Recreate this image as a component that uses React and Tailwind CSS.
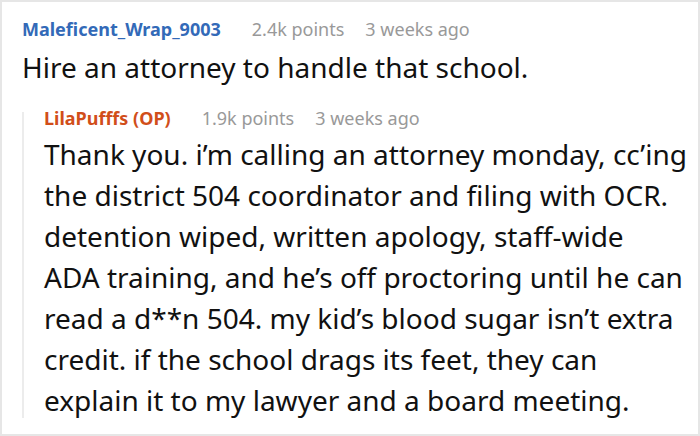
const replyLines = [
  'Thank you. i’m calling an attorney monday, cc’ing',
  'the district 504 coordinator and filing with OCR.',
  'detention wiped, written apology, staff-wide',
  'ADA training, and he’s off proctoring until he can',
  'read a d**n 504. my kid’s blood sugar isn’t extra',
  'credit. if the school drags its feet, they can',
  'explain it to my lawyer and a board meeting.',
]

export default function App() {
  return (
    <div className="w-[700px] h-[436px] bg-white border-2 border-[#e6e6e6] pl-[20px] pt-[16px] text-[#111] font-['Noto_Sans',sans-serif] overflow-hidden">
      <div className="flex items-baseline text-[18px] leading-[22px]">
        <span className="font-bold text-[#336ab8]">Maleficent_Wrap_9003</span>
        <span className="ml-[31px] text-[#999]">2.4k points</span>
        <span className="ml-[21px] text-[#999]">3 weeks ago</span>
      </div>
      <p className="text-[28px] leading-[36px] mt-[9px]">Hire an attorney to handle that school.</p>

      <div className="mt-[27px] border-l-2 border-[#ececec] pl-[20px] h-[306px]">
        <div className="flex items-baseline text-[18px] leading-[12px]">
          <span className="font-bold text-[#d14e1a]">LilaPufffs (OP)</span>
          <span className="ml-[31px] text-[#999]">1.9k points</span>
          <span className="ml-[21px] text-[#999]">3 weeks ago</span>
        </div>
        <p className="text-[28px] leading-[41px] mt-[10px] whitespace-nowrap">
          {replyLines.map((line, i) => (
            <span key={i} className="block">{line}</span>
          ))}
        </p>
      </div>
    </div>
  )
}
